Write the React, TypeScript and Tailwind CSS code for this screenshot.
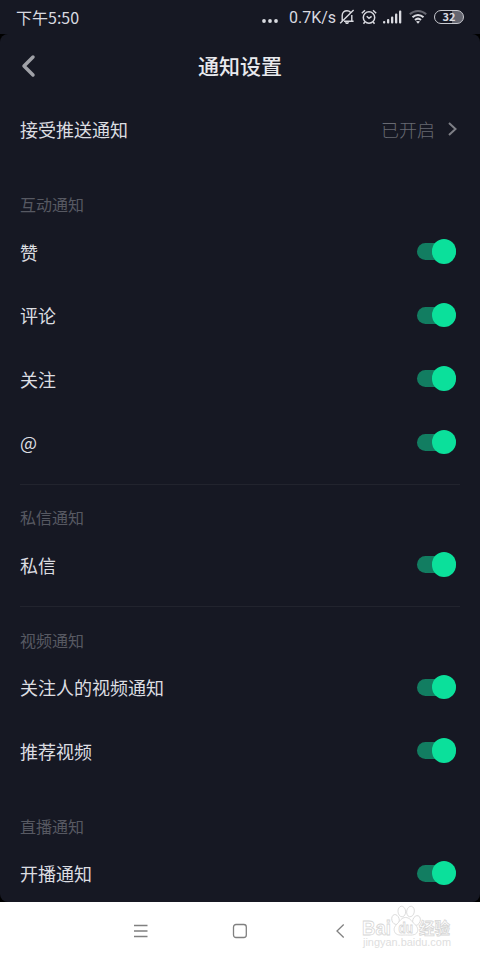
import { useState } from "react";

type Section = {
  title: string;
  items: string[];
  divider: boolean;
};

const sections: Section[] = [
  { title: "互动通知", items: ["赞", "评论", "关注", "@"], divider: false },
  { title: "私信通知", items: ["私信"], divider: true },
  { title: "视频通知", items: ["关注人的视频通知", "推荐视频"], divider: true },
  { title: "直播通知", items: ["开播通知"], divider: false },
];

function StatusBar() {
  return (
    <div className="flex h-[34px] shrink-0 items-center justify-between bg-[#161823] pl-4 pr-4 text-[#d9dae0]">
      <span className="pb-px text-[16px] leading-none">下午5:50</span>
      <div className="flex items-center">
        <svg className="mt-[7px] mr-[11px]" width="16" height="4" viewBox="0 0 16 4" fill="currentColor">
          <circle cx="2" cy="2" r="1.9" />
          <circle cx="8" cy="2" r="1.9" />
          <circle cx="14" cy="2" r="1.9" />
        </svg>
        <span className='w-[47px] pt-[2px] whitespace-nowrap font-["Roboto",sans-serif] text-[16px] leading-none'>0.7K/s</span>
        {/* Muted bell */}
        <svg className="ml-[3px]" width="16" height="16" viewBox="0 0 16 16" fill="none" stroke="currentColor" strokeWidth="1.4">
          <path d="M3.2 11.8V6.6C3.2 3.6 5.2 1.8 8 1.8c1.5 0 2.7.5 3.5 1.4M12.8 6v5.8M5 12.2h9.6M14.6 1 1.2 14.2" />
          <path d="M5.800 13.200h4.400c-.3 1.200-1.100 1.800-2.200 1.800s-1.900-.6-2.200-1.800z" fill="currentColor" stroke="none" />
        </svg>
        {/* Alarm */}
        <svg className="ml-[6px]" width="16" height="16" viewBox="0 0 16 16" fill="none" stroke="currentColor" strokeWidth="1.5">
          <circle cx="8" cy="8.500" r="5.700" />
          <path d="M5.700 7.300 8 9.300l2.600-2M.8 4.200 4 1.300M15.200 4.200 12 1.300M3.800 13l-1.300 1.700M12.200 13l1.300 1.700" />
        </svg>
        {/* Signal */}
        <svg className="ml-[6px]" width="19" height="14" viewBox="0 0 19 14" fill="currentColor">
          <rect x="0" y="11" width="2.300" height="2.500" rx="1" />
          <rect x="4" y="9" width="2.300" height="4.500" rx="1" />
          <rect x="8" y="6.500" width="2.300" height="7" rx="1" />
          <rect x="12" y="3.500" width="2.300" height="10" rx="1" />
          <rect x="16" y="0.500" width="2.300" height="13" rx="1" />
        </svg>
        {/* Wifi */}
        <svg className="ml-[7px]" width="18" height="14" viewBox="0 0 18 14" fill="none" stroke="currentColor" strokeWidth="2">
          <path d="M.8 4.300C5.500-.1 12.500-.1 17.200 4.300" opacity=".4" />
          <path d="M3.500 7.300c3.200-3 7.800-3 11 0" />
          <path d="M6 10c1.800-1.600 4.200-1.600 6 0" />
          <path d="M7 11.600c1.200-.9 2.800-.9 4 0l-2 2.200z" fill="currentColor" stroke="none" />
        </svg>
        <div className="ml-[7px] flex h-[14px] w-[30px] items-center justify-center rounded-full border-[1.5px] border-[#c9cad0] bg-linear-to-r from-[#161823] from-60% to-[#656670] to-60% pb-px text-[11px] leading-none font-bold">
          32
        </div>
      </div>
    </div>
  );
}

function Toggle({ label }: { label: string }) {
  const [on, setOn] = useState(true);

  return (
    <button
      role="switch"
      aria-checked={on}
      aria-label={label}
      onClick={() => setOn(!on)}
      className={`flex h-[17px] w-[39px] items-center rounded-full ${
        on ? "justify-end bg-[#127d61]" : "justify-start bg-[#3a3c47]"
      }`}
    >
      <span className={`size-[24.500px] shrink-0 rounded-full ${on ? "bg-[#0be09b]" : "bg-[#8a8b91]"}`} />
    </button>
  );
}

function NavBar() {
  return (
    <div className="relative h-[58px] shrink-0 bg-white text-[#808080]">
      <div className="flex h-full items-center pl-[133px]">
        <svg width="15" height="14" viewBox="0 0 15 14" stroke="currentColor" strokeWidth="1.300">
          <path d="M1 1.500h13.500M1 7h13.500M1 12.500h13.500" />
        </svg>
        <svg className="ml-[84px]" width="16" height="16" viewBox="0 0 16 16" fill="none" stroke="currentColor" strokeWidth="1.300">
          <rect x="1.500" y="1.500" width="12.800" height="13" rx="2.500" />
        </svg>
        <svg className="ml-[87px]" width="10" height="16" viewBox="0 0 10 16" fill="none" stroke="currentColor" strokeWidth="1.300">
          <path d="M8.700 1.500 2 8l6.700 6.500" />
        </svg>
      </div>
      {/* Watermark */}
      <svg
        className="absolute top-0 left-[358px]"
        width="100"
        height="50"
        viewBox="0 0 100 50"
        fill="#fff"
        stroke="#d6d6d6"
        strokeWidth="0.800"
        fontFamily='"Liberation Sans", "Noto Sans CJK SC", sans-serif'
      >
        <ellipse cx="37.500" cy="17.500" rx="3.700" ry="5" transform="rotate(-15 37.500 17.500)" />
        <ellipse cx="43.800" cy="9.500" rx="3.800" ry="5.300" transform="rotate(-5 43.800 9.500)" />
        <ellipse cx="52.500" cy="9.500" rx="3.800" ry="5.300" transform="rotate(10 52.500 9.500)" />
        <ellipse cx="58.500" cy="18.500" rx="3.700" ry="5" transform="rotate(20 58.500 18.500)" />
        <path d="M47.500 15.500c-4 0-5.500 3.500-8 6-3 3-4 5-3 8 1.500 4.500 6.500 3.500 11 3.500s10.500 1 12-3.500c1-3-.5-5-3.500-8s-4.500-6-8.500-6z" />
        <text x="4" y="32.500" fontSize="21" fontWeight="bold" textLength="29" lengthAdjust="spacingAndGlyphs">Bai</text>
        <text x="40.500" y="31" fontSize="14" fontWeight="bold" textLength="14.500" lengthAdjust="spacingAndGlyphs">du</text>
        <text x="61" y="31.500" fontSize="16" fontWeight="bold" textLength="31" lengthAdjust="spacingAndGlyphs">经验</text>
        <text x="5" y="43.500" fontSize="10" fill="#dedede" stroke="none" textLength="88" lengthAdjust="spacingAndGlyphs">jingyan.baidu.com</text>
      </svg>
    </div>
  );
}

export default function App() {
  return (
    <div className='flex h-[960px] w-[480px] flex-col overflow-hidden bg-black font-["Noto_Sans_CJK_SC",sans-serif]'>
      <StatusBar />

      <div className="min-h-0 flex-1 overflow-hidden rounded-lg bg-[#161823]">
        <header className="grid h-[63.250px] grid-cols-[1fr_auto_1fr] items-center px-5">
          <button aria-label="返回" className="text-[#a0a1a7]">
            <svg width="18" height="24" viewBox="0 0 18 24" fill="none" stroke="currentColor" strokeWidth="3.500" strokeLinecap="round" strokeLinejoin="round">
              <path d="M13 3 4 12l9 9" />
            </svg>
          </button>
          <h1 className="text-[21px] leading-none font-medium text-[#e8e9ed]">通知设置</h1>
        </header>

        <div className="flex h-[63.500px] items-center justify-between pr-[22px] pl-5">
          <span className="text-lg leading-none text-[#dcdde1]">接受推送通知</span>
          <div className="flex items-center gap-3 text-[#686a72]">
            <span className="pb-px text-lg leading-none font-light">已开启</span>
            <svg width="11" height="14" viewBox="0 0 11 14" fill="none" stroke="#7d7e85" strokeWidth="2">
              <path d="m2 1 6.500 6L2 13" />
            </svg>
          </div>
        </div>

        {sections.map((section) => (
          <section key={section.title}>
            <div className="h-[29.500px] px-5 pt-[10px]">
              {section.divider && <div className="h-px bg-[#22242e]" />}
            </div>
            <h2 className="flex h-[29.500px] items-center px-5 pb-[2px] text-base leading-none font-normal text-[#575962]">
              {section.title}
            </h2>
            {section.items.map((item) => (
              <div key={item} className="flex h-[63.500px] items-center justify-between pr-6 pl-5">
                <span className="text-lg leading-none text-[#dcdde1]">{item}</span>
                <Toggle label={item} />
              </div>
            ))}
          </section>
        ))}
      </div>

      <NavBar />
    </div>
  );
}
